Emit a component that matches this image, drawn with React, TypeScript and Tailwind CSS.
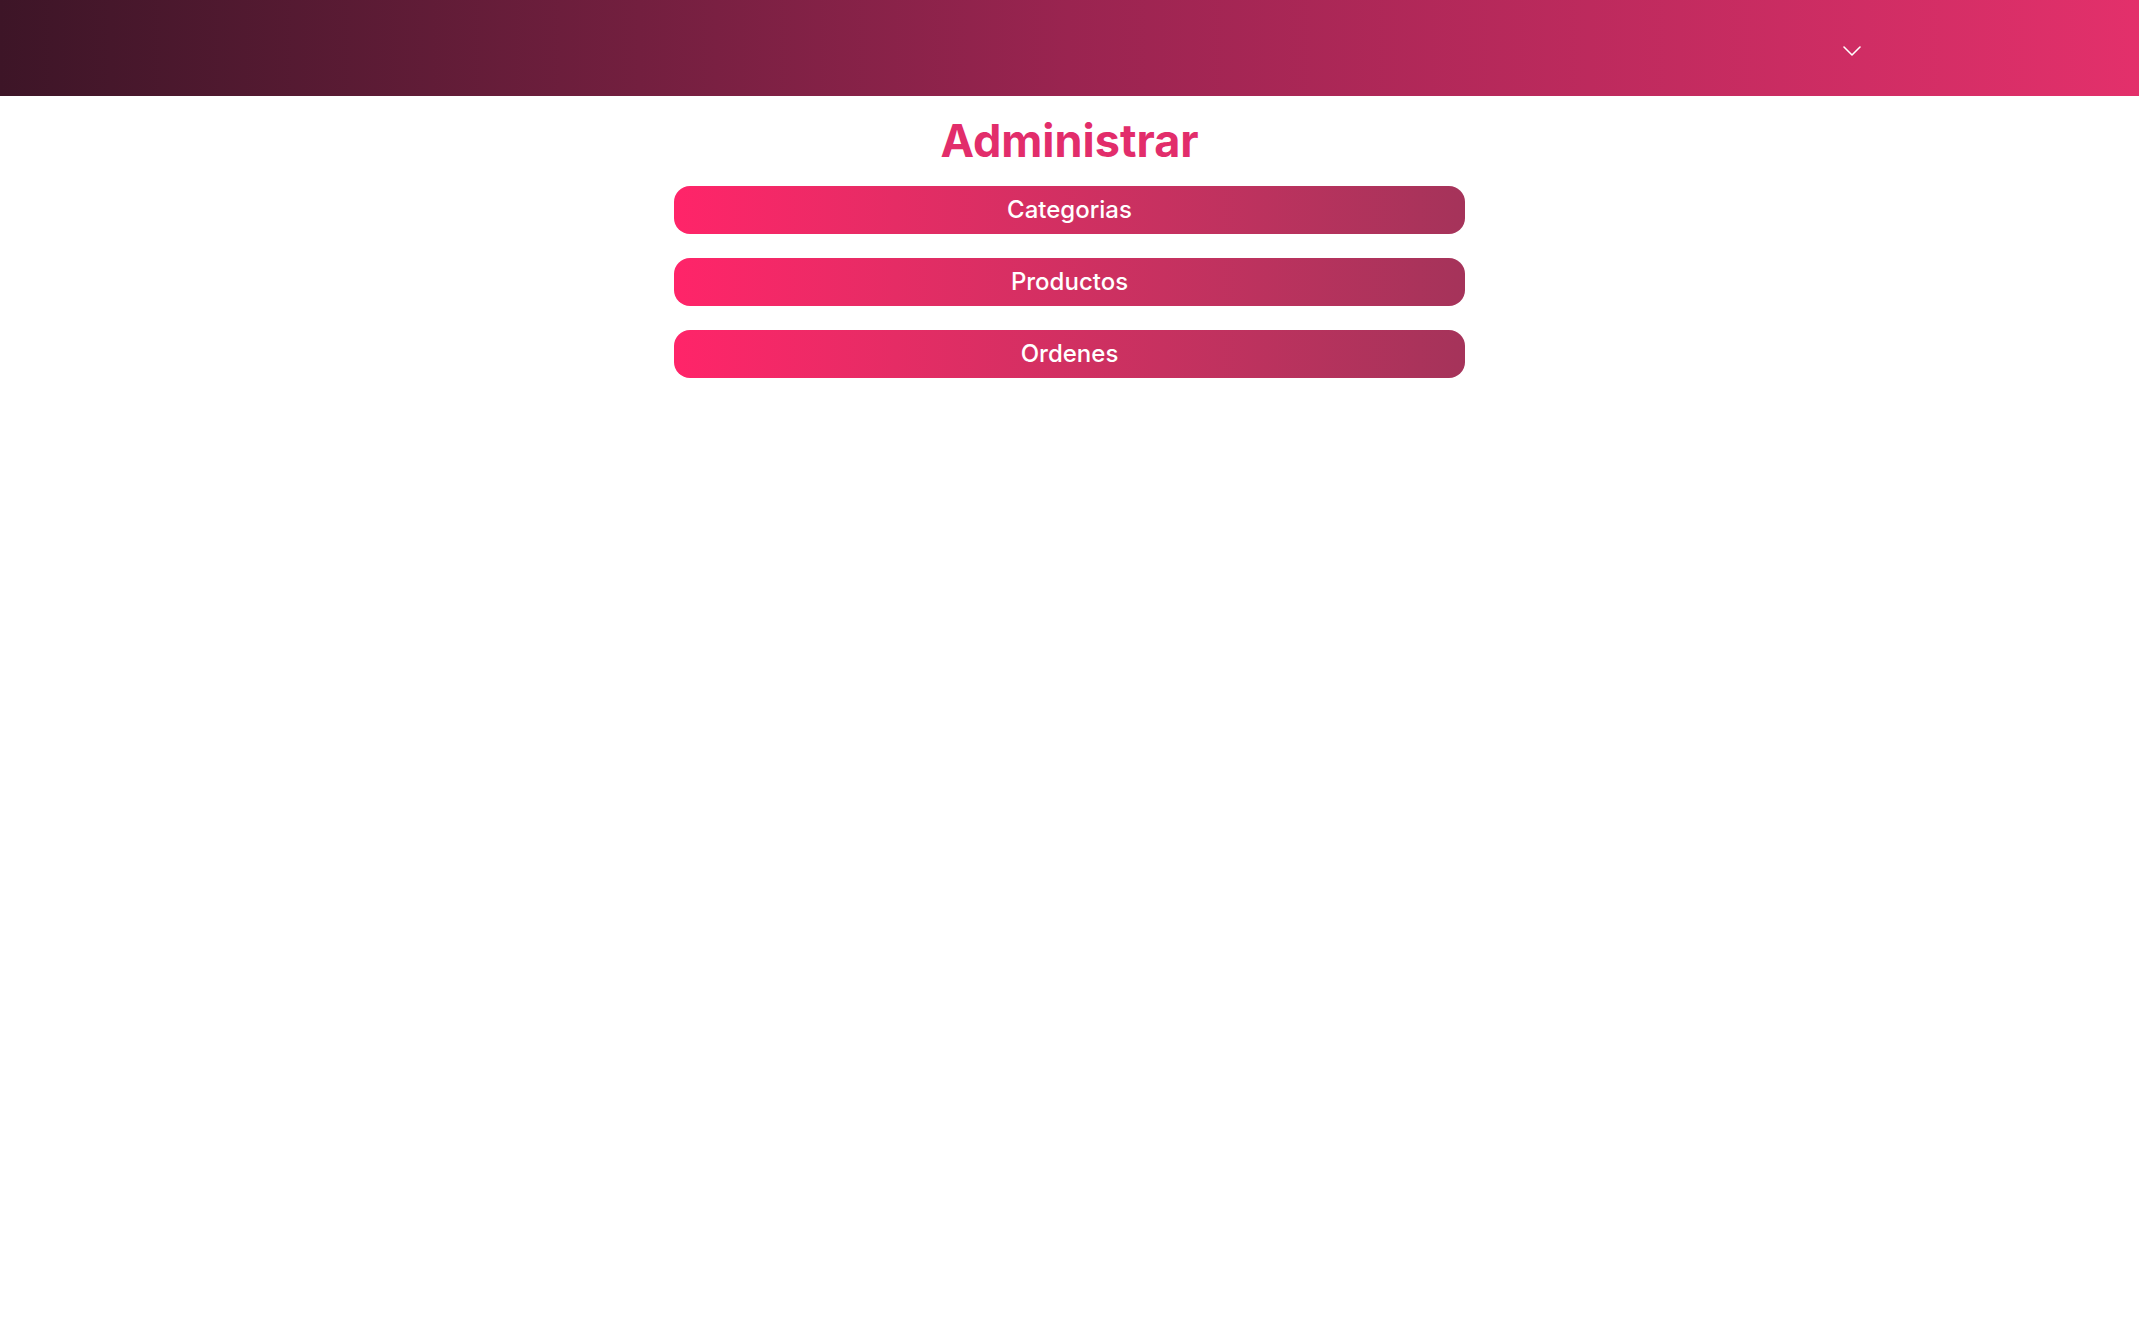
const items = ['Categorias', 'Productos', 'Ordenes']

function Chevron() {
  return (
    <svg width="18" height="10" viewBox="0 0 18 10" fill="none" className="block">
      <polyline points="1,1 9,9 17,1" stroke="white" strokeWidth="1.6" strokeLinecap="round" strokeLinejoin="round" />
    </svg>
  )
}

export default function App() {
  return (
    <div className="min-h-screen bg-white" style={{ fontFamily: 'Inter, "Noto Sans", sans-serif' }}>
      <header className="h-[96px] w-full bg-gradient-to-r from-[#3d1527] via-[#9a2450] to-[#e3306b] flex items-center justify-end pr-[278px]">
        <button className="pt-[6px]">
          <Chevron />
        </button>
      </header>
      <main className="flex flex-col items-center">
        <h1 className="mt-[22px] mb-[23px] text-[45px] leading-[45px] font-bold text-[#e22d6b]">Administrar</h1>
        <div className="w-[791px] flex flex-col gap-6">
          {items.map(label => (
            <button
              key={label}
              className="h-[48px] w-full rounded-2xl bg-gradient-to-r from-[#ff2469] to-[#a5335a] text-white text-2xl font-medium"
            >
              {label}
            </button>
          ))}
        </div>
      </main>
    </div>
  )
}
